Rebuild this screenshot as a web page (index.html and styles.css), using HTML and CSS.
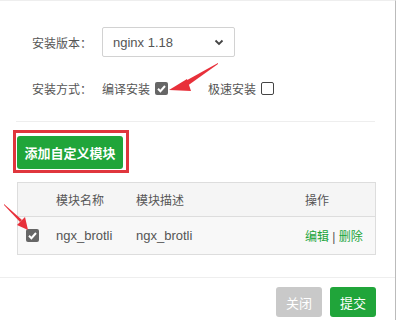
FILE: index.html
```html
<!DOCTYPE html>
<html>
<head>
  <meta charset="utf-8">
  <link rel="stylesheet" href="styles.css">
</head>
<body>
  <div class="dialog">
    <div class="form">
      <div class="row row-version">
        <span class="label">安装版本：</span>
        <div class="select">
          <span>nginx 1.18</span>
          <svg class="chevron" width="10" height="7" viewBox="0 0 10 7"><path d="M1.5 1.5 L5 5 L8.5 1.5" fill="none" stroke="#444" stroke-width="1.8"/></svg>
        </div>
      </div>
      <div class="row row-type">
        <span class="label">安装方式：</span>
        <span class="option">编译安装 <span class="check checked"><svg width="13" height="13" viewBox="0 0 13 13"><path d="M3 6.8 L5.4 9.2 L10 4" fill="none" stroke="#fff" stroke-width="2"/></svg></span></span>
        <span class="option option-fast">极速安装 <span class="check"></span></span>
      </div>
    </div>

    <div class="divider"></div>

    <div class="actions">
      <div class="highlight">
        <button class="btn btn-green btn-add">添加自定义模块</button>
      </div>
    </div>

    <div class="table">
      <div class="tr thead">
        <span class="td td-check"></span>
        <span class="td td-name">模块名称</span>
        <span class="td td-desc">模块描述</span>
        <span class="td td-op">操作</span>
      </div>
      <div class="tr tbody">
        <span class="td td-check"><span class="check checked"><svg width="13" height="13" viewBox="0 0 13 13"><path d="M3 6.8 L5.4 9.2 L10 4" fill="none" stroke="#fff" stroke-width="2"/></svg></span></span>
        <span class="td td-name">ngx_brotli</span>
        <span class="td td-desc">ngx_brotli</span>
        <span class="td td-op"><a class="link">编辑</a> | <a class="link">删除</a></span>
      </div>
    </div>

    <div class="footer">
      <button class="btn btn-gray">关闭</button>
      <button class="btn btn-green">提交</button>
    </div>

    <!-- red annotation arrows -->
    <svg class="arrow arrow-top" width="60" height="36" viewBox="0 0 60 36">
      <path d="M58 1 L20 22 L23 27 L58 2 Z" fill="#e8303a"/>
      <path d="M9 28 L27 17 L31 29 Z" fill="#e8303a"/>
    </svg>
    <svg class="arrow arrow-left" width="30" height="30" viewBox="0 0 30 30">
      <path d="M1 1 L19 17 L17 19 L1 2 Z" fill="#e8303a"/>
      <path d="M25 27 L14 22 L22 14 Z" fill="#e8303a"/>
    </svg>
  </div>
</body>
</html>
```
FILE: styles.css
```css
body {
  margin: 0;
  width: 398px;
  height: 320px;
  overflow: hidden;
  background: #fff;
  font-family: "Liberation Sans", "Noto Sans CJK SC", sans-serif;
  font-size: 12px;
  color: #555;
}

.dialog {
  position: relative;
  width: 396px;
  height: 320px;
  border-top: 1px solid #eee;
  border-right: 1px solid #bbb;
  box-sizing: border-box;
}

.form {
  padding: 26px 0 0 32px;
}

.row {
  display: flex;
  align-items: center;
}

.label {
  width: 70px;
  color: #555;
}

.select {
  width: 133px;
  height: 30px;
  box-sizing: border-box;
  border: 1px solid #d2d2d2;
  border-radius: 2px;
  display: flex;
  align-items: center;
  justify-content: space-between;
  padding: 0 10px 0 10px;
  font-size: 13px;
  color: #555;
}

.chevron {
  margin-top: 1px;
}

.row-type {
  margin-top: 23px;
  height: 16px;
}

.option {
  display: flex;
  align-items: center;
  gap: 5px;
}

.option-fast {
  margin-left: 40px;
}

.check {
  display: inline-block;
  width: 13px;
  height: 13px;
  box-sizing: border-box;
  border: 1px solid #444;
  border-radius: 2px;
  background: #fff;
}

.check.checked {
  border: none;
  background: #666;
}

.check svg {
  display: block;
}

.divider {
  margin: 25px 20px 0 16px;
  border-top: 1px solid #eee;
}

.actions {
  padding: 8px 0 0 13px;
}

.highlight {
  display: inline-block;
  border: 3px solid #e0363d;
  padding: 3px 3px 1px 1px;
}

.btn {
  border: none;
  border-radius: 3px;
  color: #fff;
  font-family: "Liberation Sans", "Noto Sans CJK SC", sans-serif;
  font-size: 13px;
  height: 30px;
  padding: 0 10px;
  cursor: pointer;
}

.btn-green {
  background: #20a53a;
}

.btn-gray {
  background: #c9c9c9;
}

.btn-add {
  display: block;
  height: 33px;
  width: 106px;
  padding: 0;
  font-weight: bold;
}

.table {
  margin: 9px 19px 0 17px;
  border: 1px solid #ddd;
}

.tr {
  display: flex;
  align-items: center;
}

.thead {
  height: 33px;
  background: #f5f5f5;
  border-bottom: 1px solid #ddd;
}

.tbody {
  height: 37px;
  background: #f8f8f8;
}

.td-check {
  width: 38px;
  padding-left: 8px;
  box-sizing: border-box;
}

.td-check .check {
  display: block;
}

.td-name {
  width: 80px;
}

.td-desc {
  width: 169px;
}

.tbody .td-name,
.tbody .td-desc {
  font-size: 13px;
}

.link {
  color: #20a53a;
}

.footer {
  position: absolute;
  left: 0;
  right: 0;
  top: 276px;
  border-top: 1px solid #eee;
  display: flex;
  justify-content: flex-end;
  gap: 8px;
  padding: 9px 19px 0 0;
}

.arrow {
  position: absolute;
}

.arrow-top {
  left: 160px;
  top: 61px;
}

.arrow-left {
  left: 3px;
  top: 202px;
}
```
